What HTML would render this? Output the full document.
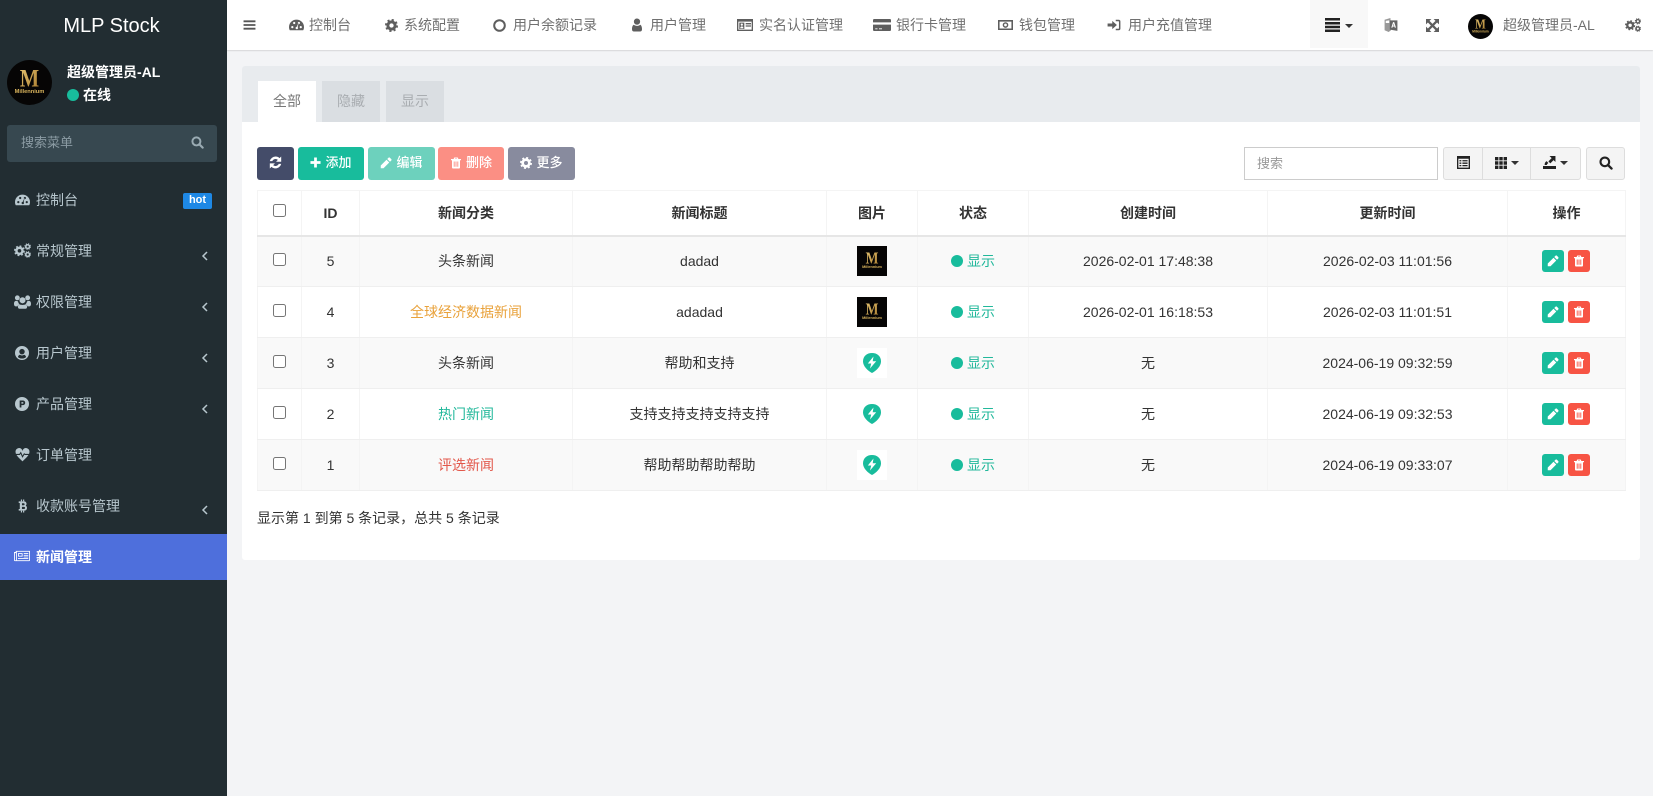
<!DOCTYPE html>
<html lang="zh">
<head>
<meta charset="utf-8">
<title>MLP Stock</title>
<style>
*{box-sizing:border-box}
html,body{margin:0;padding:0;width:1653px;height:796px;overflow:hidden;background:#f3f4f6;font-family:"Liberation Sans","Noto Sans CJK SC",sans-serif;font-size:14px;color:#333}
.a{position:absolute;white-space:nowrap}
svg{display:block}
#side{position:absolute;left:0;top:0;width:227px;height:796px;background:#222d32}
#top{position:absolute;left:227px;top:0;width:1426px;height:50px;background:#fff;box-shadow:0 1px 1px rgba(0,0,0,.12)}
.mi{color:#b8c7ce;line-height:20px;font-size:14px}
.nt{color:#707070;line-height:20px;font-size:14px;top:15px}
.ni{color:#5e5e5e}
.btn{position:absolute;top:147px;height:33px;border-radius:3px;color:#fff;font-size:13px;font-weight:500;line-height:31px;display:flex;align-items:center;justify-content:center;gap:4px;padding-bottom:2px}
.tb{position:absolute;top:147px;height:33px;background:#f4f4f4;border:1px solid #ddd;display:flex;align-items:center;justify-content:center;gap:4px;color:#222;padding-bottom:2px}
.caret{width:0;height:0;border-left:4px solid transparent;border-right:4px solid transparent;border-top:4px solid #333}
table{position:absolute;left:257px;top:190px;width:1368px;border-collapse:collapse;table-layout:fixed;font-size:14px;border:1px solid #f4f4f4}
th,td{border:1px solid #f4f4f4;text-align:center;padding:0;vertical-align:middle}
td{border-bottom-color:#efefef}
th{height:45px;border-bottom:2px solid #e6e6e6;font-weight:bold;color:#333}
td{height:51px;color:#333}
tbody tr:nth-child(odd) td{background:#f9f9f9}
.cb{display:block;width:13px;height:13px;border:1px solid #767676;border-radius:2.5px;background:#fff;margin:0 auto 4px}
.img{display:block;width:30px;height:30px;margin:0 auto;background:#fff}
.st{display:flex;align-items:center;justify-content:center;color:#22b89b;gap:4px}
.dot{width:12px;height:12px;border-radius:50%;background:#18bc9c;display:inline-block}
.ops{display:flex;justify-content:center;gap:4px;margin-left:-2px}
.ops span{width:22px;height:22px;border-radius:3px;display:flex;align-items:center;justify-content:center;color:#fff}
</style>
</head>
<body>
<svg width="0" height="0" style="position:absolute">
<defs>
<linearGradient id="gold" x1="0" y1="0" x2="1" y2="1"><stop offset="0" stop-color="#e8c877"/><stop offset="1" stop-color="#a87a2c"/></linearGradient>
<symbol id="bars" viewBox="0 0 24 24"><path fill="currentColor" d="M1 3.500h22v3.400H1zM1 10.300h22v3.400H1zM1 17.100h22v3.400H1z"/></symbol>
<symbol id="dash" viewBox="0 0 24 24"><path fill="currentColor" fill-rule="evenodd" d="M0 14.500a12 12 0 1 1 24 0c0 2-.5 3.600-1.300 5H1.300C.5 18.100 0 16.500 0 14.500zM3.500 14.500a1.800 1.800 0 1 0 3.600 0 1.800 1.800 0 0 0-3.600 0zM6.500 8a1.800 1.800 0 1 0 3.600 0 1.800 1.800 0 0 0-3.600 0zM14 8a1.800 1.800 0 1 0 3.600 0 1.800 1.800 0 0 0-3.600 0zM17 14.500a1.800 1.800 0 1 0 3.600 0 1.800 1.800 0 0 0-3.600 0zM10.500 16a2 2 0 1 0 3.400-1.400L15.500 7 12.500 14c-1-.2-2 .9-2 2z"/></symbol>
<symbol id="gear" viewBox="0 0 24 24"><circle cx="12" cy="12" r="6.700" fill="none" stroke="currentColor" stroke-width="5.400"/><circle cx="12" cy="12" r="10.300" fill="none" stroke="currentColor" stroke-width="3.400" stroke-dasharray="4 4.090"/></symbol>
<symbol id="cogs" viewBox="0 0 28 24"><g transform="translate(0,3.500) scale(.75)"><use href="#gear" width="24" height="24"/></g><g transform="translate(17,0) scale(.46)"><use href="#gear" width="24" height="24"/></g><g transform="translate(17,13) scale(.46)"><use href="#gear" width="24" height="24"/></g></symbol>
<symbol id="user" viewBox="0 0 20 28"><path fill="currentColor" d="M10 1a6 6 0 1 1 0 12.500A6 6 0 0 1 10 1zM3.500 13.500c1.800 1.500 4 2.300 6.500 2.300s4.700-.8 6.500-2.300c2.200 1 3.500 4.500 3.500 9 0 3-1.500 4.500-4 4.500H4c-2.500 0-4-1.500-4-4.500 0-4.500 1.300-8 3.500-9z"/></symbol>
<symbol id="idc" viewBox="0 0 24 18"><path fill="currentColor" fill-rule="evenodd" d="M0 0h24v18H0zM2 4v12h20V4z"/><path fill="currentColor" d="M3.500 5.500H11V15H3.500zM13 6h8v2h-8zM13 9.500h8v2h-8z"/><path fill="#fff" d="M7.200 6.800a1.700 1.700 0 1 1 0 3.400 1.700 1.700 0 0 1 0-3.400zM4.800 14c0-2 1-3 2.400-3s2.400 1 2.400 3z"/></symbol>
<symbol id="card" viewBox="0 0 24 16"><path fill="currentColor" d="M1.500 0h21A1.500 1.500 0 0 1 24 1.500V4.500H0V1.500A1.500 1.500 0 0 1 1.500 0zM0 7.500h24v7A1.500 1.500 0 0 1 22.500 16h-21A1.500 1.500 0 0 1 0 14.500z"/><path fill="#fff" d="M3 12.500h3v1.200H3zM8 12.500h4v1.200H8z"/></symbol>
<symbol id="money" viewBox="0 0 24 18"><path fill="currentColor" fill-rule="evenodd" d="M0 1h24v16H0zM2.500 3.500v11h19v-11zM12 4.500a4.500 4.500 0 1 1 0 9 4.500 4.500 0 0 1 0-9zM12 6.800a2.200 2.200 0 1 0 0 4.400 2.200 2.200 0 0 0 0-4.400z"/></symbol>
<symbol id="signin" viewBox="0 0 24 24"><path fill="currentColor" d="M1 9.500h8V5l8 7-8 7v-4.500H1zM15 3h5a3 3 0 0 1 3 3v12a3 3 0 0 1-3 3h-5v-2.500h4.500a1 1 0 0 0 1-1v-11a1 1 0 0 0-1-1H15z"/></symbol>
<symbol id="full" viewBox="0 0 24 24"><path fill="currentColor" d="M0 0h10L6.500 3.500 12 9 17.500 3.500 14 0H24V10L20.500 6.500 15 12l5.500 5.500L24 14V24H14l3.500-3.500L12 15l-5.500 5.500L10 24H0V14l3.500 3.500L9 12 3.500 6.500 0 10z"/></symbol>
<symbol id="trans" viewBox="0 0 24 24"><path fill="#999" d="M1 3l10-3 1 21-4 3-7-3z"/><path fill="#fff" d="M3 5l6-1v4.500H3z"/><path fill="#666" d="M10 4h13v18l-13-2z"/><path fill="#fff" d="M15.500 7h2l3 9.500h-2l-.6-2h-2.800l-.6 2h-2zM15.700 13h1.800L16.600 9.800z"/></symbol>
<symbol id="users" viewBox="0 0 28 24"><path fill="currentColor" d="M14 5a5 5 0 1 1 0 10 5 5 0 0 1 0-10zM5.500 2a4 4 0 1 1 0 8 4 4 0 0 1 0-8zM22.500 2a4 4 0 1 1 0 8 4 4 0 0 1 0-8zM0 16c0-3 1-5 3.500-5 1 0 2 .5 3 .8C7 14 8 15.500 9 16.500 7.500 17 6 18 6 20H2.500C1 20 0 18.500 0 16zM28 16c0-3-1-5-3.500-5-1 0-2 .5-3 .8-.5 2.200-1.500 3.700-2.500 4.700 1.500.5 3 1.500 3 3.500h3.500C27 20 28 18.500 28 16zM8.500 16.500c1.500.8 3.500 1.200 5.500 1.200s4-.4 5.500-1.200c1.500 1 2 2.500 2 4.500 0 1.500-1 3-2.500 3H9c-1.500 0-2.500-1.500-2.500-3 0-2 .5-3.500 2-4.500z"/></symbol>
<symbol id="ucirc" viewBox="0 0 24 24"><path fill="currentColor" fill-rule="evenodd" d="M12 0a12 12 0 1 1 0 24 12 12 0 0 1 0-24zM12 5a4.700 4.700 0 1 0 0 9.400A4.700 4.700 0 0 0 12 5zM5 18.800A9.500 9.500 0 0 0 12 21.500a9.500 9.500 0 0 0 7-2.700c-.5-2-1.800-3.300-3.500-3.800-1 .8-2.200 1.200-3.500 1.200s-2.500-.4-3.500-1.200c-1.700.5-3 1.800-3.500 3.800z"/></symbol>
<symbol id="pcirc" viewBox="0 0 24 24"><path fill="currentColor" fill-rule="evenodd" d="M12 0a12 12 0 1 1 0 24 12 12 0 0 1 0-24zM8 6v12h3v-4h2.500a4 4 0 0 0 0-8zM11 8.700h2.200a1.300 1.300 0 0 1 0 2.600H11z"/></symbol>
<symbol id="heart" viewBox="0 0 26 24"><path fill="currentColor" d="M13 23C8 18 1 12.500 1 7a6 6 0 0 1 12-2 6 6 0 0 1 12 2c0 5.500-7 11-12 16z"/><path fill="none" stroke="#222d32" stroke-width="1.800" d="M0 11h8l2-3 3 7 3-5 1.500 1H26"/></symbol>
<symbol id="btc" viewBox="0 0 24 24"><path fill="currentColor" fill-rule="evenodd" d="M5 3.500h10a4.500 4.500 0 0 1 3 7.800 5 5 0 0 1-2.500 9.200H5v-3h2V6.500H5zM11 7v3.500h3.200a1.700 1.700 0 0 0 0-3.500zM11 13.500V17.500h3.800a2 2 0 0 0 0-4z"/><path fill="currentColor" d="M9 0h2.200v3.500H9zM13 0h2.200v3.500H13zM9 20.500h2.200V24H9zM13 20.500h2.200V24H13z"/></symbol>
<symbol id="news" viewBox="0 0 28 20"><path fill="currentColor" fill-rule="evenodd" d="M0 3h3V1h25v16.500a1.500 1.500 0 0 1-1.500 1.500h-25A1.500 1.500 0 0 1 0 17.500zM1.500 5v12.500h2V5zM5 2.500v15h21.500v-15z"/><path fill="currentColor" fill-rule="evenodd" d="M7 5h8v6H7zM8.500 6.500v3h5v-3zM17 5h8v1.500h-8zM17 8h8v1.500h-8zM17 11h8v1.500h-8zM7 13.500h18V15H7z"/></symbol>
<symbol id="search" viewBox="0 0 24 24"><circle cx="10" cy="10" r="7.400" fill="none" stroke="currentColor" stroke-width="3.600"/><path stroke="currentColor" stroke-width="4" stroke-linecap="round" d="M15.500 15.500l6 6"/></symbol>
<symbol id="refresh" viewBox="0 0 24 24"><path fill="currentColor" d="M12 1a11 11 0 0 1 7.500 3L22.500 1v9.500H13l3.300-3.300A6.500 6.500 0 0 0 6 9.500H1.500A11 11 0 0 1 12 1zM1.500 13.500H11l-3.300 3.300A6.500 6.500 0 0 0 18 14.500h4.500A11 11 0 0 1 4.500 20L1.500 23z"/></symbol>
<symbol id="plus" viewBox="0 0 24 24"><path fill="currentColor" d="M9 1h6v8h8v6h-8v8H9v-8H1V9h8z"/></symbol>
<symbol id="pencil" viewBox="0 0 24 24"><path fill="currentColor" d="M17 1.500a2 2 0 0 1 2.800 0l2.700 2.700a2 2 0 0 1 0 2.800L20 9.500 14.500 4zM13 5.500l5.500 5.500L7 22.500H1.500V17z"/></symbol>
<symbol id="trash" viewBox="0 0 24 24"><path fill="currentColor" fill-rule="evenodd" d="M8.500 1h7l1.300 3H22v2.500h-2V21a2 2 0 0 1-2 2H6a2 2 0 0 1-2-2V6.500H2V4h5.200zM10 4h4l-.5-1h-3zM7.500 9v10.500h1.800V9zM11.100 9v10.500h1.800V9zM14.700 9v10.500h1.800V9z"/></symbol>
<symbol id="list" viewBox="0 0 24 24"><path fill="currentColor" fill-rule="evenodd" d="M0 0h24v24H0zM2.500 5v16.500h19V5z"/><path fill="currentColor" d="M4.500 7.500h3.500v2.500H4.500zM4.500 12h3.500v2.500H4.500zM4.500 16.500h3.500V19H4.500zM10 7.500h9.500v2.500H10zM10 12h9.500v2.500H10zM10 16.500h9.500V19H10z"/></symbol>
<symbol id="th" viewBox="0 0 24 24"><path fill="currentColor" d="M0 0h6.800v6.800H0zM8.600 0h6.800v6.800H8.600zM17.200 0H24v6.800h-6.800zM0 8.600h6.800v6.800H0zM8.600 8.600h6.800v6.800H8.600zM17.200 8.600H24v6.800h-6.800zM0 17.200h6.800V24H0zM8.600 17.200h6.800V24H8.600zM17.200 17.200H24V24h-6.800z"/></symbol>
<symbol id="export" viewBox="0 0 24 24"><path fill="currentColor" d="M0 18.500h24V24H0zM12 0h11v11l-3.500-3.500-6 6L10 10l6-6zM3 16.500c0-3 1-5.500 3.500-7l3.500 3.500c-1.500 1-2.500 2-3 3.500z"/></symbol>
<symbol id="pin" viewBox="0 0 18 20"><path fill="#18bc9c" d="M9 0c5 0 9 3 9 8.500 0 4.800-5 9.500-9 11.500C5 18 0 13.300 0 8.500 0 3 4 0 9 0z"/><path fill="#fff" d="M10.500 3.500L4.800 10.500h3.400L7 15.500 13.200 8.300H9.700z"/></symbol>
<symbol id="mlogo" viewBox="0 0 30 30"><rect width="30" height="30" fill="#060505"/><text transform="translate(15 17.500) scale(.8 1)" text-anchor="middle" font-family="Liberation Serif,serif" font-size="17" font-weight="bold" fill="url(#gold)">M</text><text x="15" y="22" text-anchor="middle" font-family="Liberation Sans,sans-serif" font-weight="bold" font-size="3.800" fill="#d8b35c">Millennium</text></symbol>
</defs>
</svg>

<div id="side">
  <div class="a" style="left:0;width:223px;top:12px;text-align:center;color:#fff;font-size:20px;line-height:28px">MLP Stock</div>
  <svg class="a" style="left:7px;top:60px;border-radius:50%" width="45" height="45"><use href="#mlogo" width="45" height="45"/></svg>
  <div class="a" style="left:67px;top:62px;color:#fff;font-weight:bold;line-height:20px">超级管理员-AL</div>
  <span class="a" style="left:67px;top:89px;width:12px;height:12px;border-radius:50%;background:#18bc9c"></span>
  <div class="a" style="left:83px;top:85px;color:#fff;font-weight:bold;line-height:20px">在线</div>
  <div class="a" style="left:7px;top:125px;width:210px;height:37px;background:#374850;border-radius:3px"></div>
  <div class="a" style="left:21px;top:133px;color:#8b9ba3;font-size:13px;line-height:20px">搜索菜单</div>
  <svg class="a" style="left:191px;top:136px;color:#9aabb3" width="13" height="13"><use href="#search" width="13" height="13"/></svg>

  <svg class="a mi" style="left:15px;top:193px" width="15" height="15"><use href="#dash" width="15" height="15"/></svg>
  <div class="a mi" style="left:36px;top:190px">控制台</div>
  <div class="a" style="left:183px;top:193px;width:29px;height:16px;background:#1e88e5;border-radius:2px;color:#fff;font-size:11px;font-weight:bold;text-align:center;line-height:15px">hot</div>

  <svg class="a mi" style="left:14px;top:243px" width="17" height="15"><use href="#cogs" width="17" height="15"/></svg>
  <div class="a mi" style="left:36px;top:241px">常规管理</div>
  <svg class="a mi" style="left:201px;top:250px" width="8" height="12"><path d="M6 2L2 6l4 4" fill="none" stroke="currentColor" stroke-width="1.500"/></svg>

  <svg class="a mi" style="left:14px;top:294px" width="17" height="15"><use href="#users" width="17" height="15"/></svg>
  <div class="a mi" style="left:36px;top:292px">权限管理</div>
  <svg class="a mi" style="left:201px;top:301px" width="8" height="12"><path d="M6 2L2 6l4 4" fill="none" stroke="currentColor" stroke-width="1.500"/></svg>

  <svg class="a mi" style="left:15px;top:346px" width="14" height="14"><use href="#ucirc" width="14" height="14"/></svg>
  <div class="a mi" style="left:36px;top:343px">用户管理</div>
  <svg class="a mi" style="left:201px;top:352px" width="8" height="12"><path d="M6 2L2 6l4 4" fill="none" stroke="currentColor" stroke-width="1.500"/></svg>

  <svg class="a mi" style="left:15px;top:397px" width="14" height="14"><use href="#pcirc" width="14" height="14"/></svg>
  <div class="a mi" style="left:36px;top:394px">产品管理</div>
  <svg class="a mi" style="left:201px;top:403px" width="8" height="12"><path d="M6 2L2 6l4 4" fill="none" stroke="currentColor" stroke-width="1.500"/></svg>

  <svg class="a mi" style="left:15px;top:448px" width="15" height="14"><use href="#heart" width="15" height="14"/></svg>
  <div class="a mi" style="left:36px;top:445px">订单管理</div>

  <svg class="a mi" style="left:16px;top:499px" width="13" height="14"><use href="#btc" width="13" height="14"/></svg>
  <div class="a mi" style="left:36px;top:496px">收款账号管理</div>
  <svg class="a mi" style="left:201px;top:504px" width="8" height="12"><path d="M6 2L2 6l4 4" fill="none" stroke="currentColor" stroke-width="1.500"/></svg>

  <div class="a" style="left:0;top:534px;width:227px;height:46px;background:#4e6fdc"></div>
  <svg class="a" style="left:14px;top:550px;color:#fff" width="16" height="12"><use href="#news" width="16" height="12"/></svg>
  <div class="a" style="left:36px;top:547px;color:#fff;line-height:20px;font-weight:bold">新闻管理</div>
</div>

<div id="top"></div>
<svg class="a ni" style="left:243px;top:18px;color:#555" width="13" height="14"><use href="#bars" width="13" height="14"/></svg>
<svg class="a ni" style="left:289px;top:18px" width="15" height="15"><use href="#dash" width="15" height="15"/></svg>
<div class="a nt" style="left:309px">控制台</div>
<svg class="a ni" style="left:385px;top:19px" width="13" height="13"><use href="#gear" width="13" height="13"/></svg>
<div class="a nt" style="left:404px">系统配置</div>
<svg class="a ni" style="left:493px;top:19px" width="13" height="13"><circle cx="6.500" cy="6.500" r="5.300" fill="none" stroke="currentColor" stroke-width="2"/></svg>
<div class="a nt" style="left:513px">用户余额记录</div>
<svg class="a ni" style="left:632px;top:18px" width="10" height="14"><use href="#user" width="10" height="14"/></svg>
<div class="a nt" style="left:650px">用户管理</div>
<svg class="a ni" style="left:737px;top:19px" width="16" height="12"><use href="#idc" width="16" height="12"/></svg>
<div class="a nt" style="left:759px">实名认证管理</div>
<svg class="a ni" style="left:873px;top:19px" width="18" height="12"><use href="#card" width="18" height="12"/></svg>
<div class="a nt" style="left:896px">银行卡管理</div>
<svg class="a ni" style="left:998px;top:19px" width="15" height="12"><use href="#money" width="15" height="12"/></svg>
<div class="a nt" style="left:1019px">钱包管理</div>
<svg class="a ni" style="left:1107px;top:18px" width="14" height="14"><use href="#signin" width="14" height="14"/></svg>
<div class="a nt" style="left:1128px">用户充值管理</div>

<div class="a" style="left:1310px;top:0;width:58px;height:48px;background:#f8f8f8"></div>
<svg class="a" style="left:1325px;top:18px;color:#222" width="15" height="14"><path fill="currentColor" d="M0 0h15v2.500H0zM0 4h15v2.500H0zM0 7.800h15v2.500H0zM0 11.500h15V14H0z"/></svg>
<span class="a caret" style="left:1345px;top:24px"></span>
<svg class="a" style="left:1384px;top:18px" width="14" height="14"><use href="#trans" width="14" height="14"/></svg>
<svg class="a" style="left:1426px;top:19px;color:#5e5e5e" width="13" height="13"><use href="#full" width="13" height="13"/></svg>
<svg class="a" style="left:1468px;top:14px;border-radius:50%" width="25" height="25"><use href="#mlogo" width="25" height="25"/></svg>
<div class="a nt" style="left:1503px">超级管理员-AL</div>
<svg class="a ni" style="left:1625px;top:18px" width="16" height="14"><use href="#cogs" width="16" height="14"/></svg>

<div class="a" style="left:242px;top:66px;width:1398px;height:494px;background:#fff;border-radius:3px"></div>
<div class="a" style="left:242px;top:66px;width:1398px;height:56px;background:#e8ebee;border-radius:3px 3px 0 0"></div>
<div class="a" style="left:258px;top:81px;width:58px;height:41px;background:#fff;color:#777;text-align:center;line-height:40px">全部</div>
<div class="a" style="left:322px;top:81px;width:58px;height:41px;background:#dadee2;color:#a9adb1;text-align:center;line-height:40px">隐藏</div>
<div class="a" style="left:386px;top:81px;width:58px;height:41px;background:#dadee2;color:#a9adb1;text-align:center;line-height:40px">显示</div>

<div class="btn" style="left:257px;width:37px;background:#444c69"><svg width="13" height="13"><use href="#refresh" width="13" height="13"/></svg></div>
<div class="btn" style="left:298px;width:66px;background:#18bc9c"><svg width="11" height="11"><use href="#plus" width="11" height="11"/></svg>添加</div>
<div class="btn" style="left:368px;width:67px;background:#6dd1bd"><svg width="12" height="12"><use href="#pencil" width="12" height="12"/></svg>编辑</div>
<div class="btn" style="left:438px;width:66px;background:#fb8f84"><svg width="12" height="12"><use href="#trash" width="12" height="12"/></svg>删除</div>
<div class="btn" style="left:508px;width:67px;background:#888b9e"><svg width="12" height="12"><use href="#gear" width="12" height="12"/></svg>更多</div>

<div class="a" style="left:1244px;top:147px;width:194px;height:33px;border:1px solid #ccc;background:#fff;color:#999;font-size:13px;line-height:31px;padding-left:12px">搜索</div>
<div class="tb" style="left:1443px;width:40px;border-radius:3px 0 0 3px"><svg width="13" height="13"><use href="#list" width="13" height="13"/></svg></div>
<div class="tb" style="left:1482px;width:49px"><svg width="12" height="12"><use href="#th" width="12" height="12"/></svg><span class="caret"></span></div>
<div class="tb" style="left:1530px;width:51px;border-radius:0 3px 3px 0"><svg width="13" height="13"><use href="#export" width="13" height="13"/></svg><span class="caret"></span></div>
<div class="tb" style="left:1586px;width:39px;border-radius:3px"><svg width="14" height="14"><use href="#search" width="14" height="14"/></svg></div>

<table>
<colgroup><col style="width:44px"><col style="width:58px"><col style="width:213px"><col style="width:254px"><col style="width:91px"><col style="width:111px"><col style="width:239px"><col style="width:240px"><col style="width:118px"></colgroup>
<thead><tr><th><span class="cb"></span></th><th>ID</th><th>新闻分类</th><th>新闻标题</th><th>图片</th><th>状态</th><th>创建时间</th><th>更新时间</th><th>操作</th></tr></thead>
<tbody>
<tr><td><span class="cb"></span></td><td>5</td><td>头条新闻</td><td>dadad</td><td><svg class="img"><use href="#mlogo" width="30" height="30"/></svg></td><td><div class="st"><i class="dot"></i>显示</div></td><td>2026-02-01 17:48:38</td><td>2026-02-03 11:01:56</td><td><div class="ops"><span style="background:#18bc9c"><svg width="12" height="12"><use href="#pencil" width="12" height="12"/></svg></span><span style="background:#f75444"><svg width="12" height="12"><use href="#trash" width="12" height="12"/></svg></span></div></td></tr>
<tr><td><span class="cb"></span></td><td>4</td><td style="color:#e9a23b">全球经济数据新闻</td><td>adadad</td><td><svg class="img"><use href="#mlogo" width="30" height="30"/></svg></td><td><div class="st"><i class="dot"></i>显示</div></td><td>2026-02-01 16:18:53</td><td>2026-02-03 11:01:51</td><td><div class="ops"><span style="background:#18bc9c"><svg width="12" height="12"><use href="#pencil" width="12" height="12"/></svg></span><span style="background:#f75444"><svg width="12" height="12"><use href="#trash" width="12" height="12"/></svg></span></div></td></tr>
<tr><td><span class="cb"></span></td><td>3</td><td>头条新闻</td><td>帮助和支持</td><td><svg class="img" viewBox="0 0 30 30"><use href="#pin" x="6" y="5" width="18" height="20"/></svg></td><td><div class="st"><i class="dot"></i>显示</div></td><td>无</td><td>2024-06-19 09:32:59</td><td><div class="ops"><span style="background:#18bc9c"><svg width="12" height="12"><use href="#pencil" width="12" height="12"/></svg></span><span style="background:#f75444"><svg width="12" height="12"><use href="#trash" width="12" height="12"/></svg></span></div></td></tr>
<tr><td><span class="cb"></span></td><td>2</td><td style="color:#22b89b">热门新闻</td><td>支持支持支持支持支持</td><td><svg class="img" viewBox="0 0 30 30"><use href="#pin" x="6" y="5" width="18" height="20"/></svg></td><td><div class="st"><i class="dot"></i>显示</div></td><td>无</td><td>2024-06-19 09:32:53</td><td><div class="ops"><span style="background:#18bc9c"><svg width="12" height="12"><use href="#pencil" width="12" height="12"/></svg></span><span style="background:#f75444"><svg width="12" height="12"><use href="#trash" width="12" height="12"/></svg></span></div></td></tr>
<tr><td><span class="cb"></span></td><td>1</td><td style="color:#e2574a">评选新闻</td><td>帮助帮助帮助帮助</td><td><svg class="img" viewBox="0 0 30 30"><use href="#pin" x="6" y="5" width="18" height="20"/></svg></td><td><div class="st"><i class="dot"></i>显示</div></td><td>无</td><td>2024-06-19 09:33:07</td><td><div class="ops"><span style="background:#18bc9c"><svg width="12" height="12"><use href="#pencil" width="12" height="12"/></svg></span><span style="background:#f75444"><svg width="12" height="12"><use href="#trash" width="12" height="12"/></svg></span></div></td></tr>
</tbody>
</table>

<div class="a" style="left:257px;top:508px;line-height:20px;color:#333">显示第 1 到第 5 条记录，总共 5 条记录</div>
</body>
</html>
